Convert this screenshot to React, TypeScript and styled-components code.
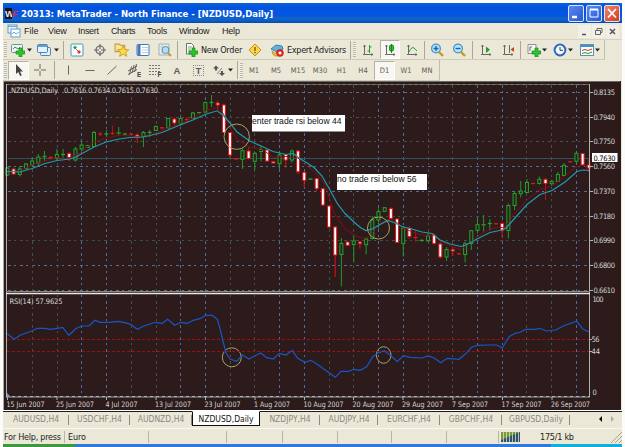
import React from 'react';
import styled, { createGlobalStyle } from 'styled-components';

const GlobalStyle = createGlobalStyle`
  * { box-sizing: border-box; }
  body {
    margin: 0;
    background: #fbfcfa;
    overflow: hidden;
  }
`;

const Screen = styled.div`
  width: 625px;
  height: 447px;
  padding: 3px 3px 0 3px;
  background: #fbfcfa;
  font-family: 'DejaVu Sans Condensed', 'DejaVu Sans', 'Liberation Sans', sans-serif;
  font-size: 8.5px;
  color: #222;
`;
const Frame = styled.div`
  display: flex;
  flex-direction: column;
  height: 444px;
  background: #ebe8d8;
`;
const TitleBar = styled.header`
  display: flex;
  align-items: center;
  height: 20px;
  padding: 1px 2px 0 1px;
  background: linear-gradient(#0a62dc 0, #0354dc 20%, #0455e0 62%, #1265c4 78%, #0a5ac8 90%, #0348b4);
  color: #fff;
`;
const Title = styled.h1`
  flex: 1;
  margin: 0 0 0 3px;
  font-family: 'DejaVu Sans Condensed', 'DejaVu Sans', sans-serif;
  font-size: 9.5px;
  font-weight: 700;
  letter-spacing: -0.04px;
  white-space: pre;
`;
const WinButton = styled.button<{ $close?: boolean }>`
  display: flex;
  width: 16px;
  height: 17px;
  margin-left: 2px;
  padding: 0;
  border: 1px solid #dce6fa;
  border-radius: 2px;
  background: ${(p) => (p.$close ? 'linear-gradient(135deg, #f08468, #d83a20)' : 'linear-gradient(135deg, #5c88f0, #2458d4)')};
`;
const MenuBar = styled.nav`
  display: flex;
  align-items: center;
  height: 17px;
  padding: 0 3px;
  border-bottom: 1px solid #d8d4c4;
  font-family: 'Liberation Sans', sans-serif;
  font-size: 9px;
`;
const MenuItem = styled.span<{ $w: number; $ls?: number }>`
  width: ${(p) => p.$w}px;
  letter-spacing: ${(p) => p.$ls || 0}px;
  white-space: nowrap;
`;
const MdiButton = styled.button`
  display: flex;
  width: 13px;
  height: 13px;
  margin-left: 1px;
  padding: 0;
  border: none;
  background: #f2f0e6;
`;
const Spacer = styled.div`
  flex: 1;
`;
const Toolbar = styled.div<{ $h: number; $w: number }>`
  display: flex;
  align-items: center;
  width: ${(p) => p.$w}px;
  height: ${(p) => p.$h}px;
  border-right: 1px solid #c0bdae;
  border-bottom: 1px solid #cfccbc;
`;
const Cell = styled.div<{ $w: number; $l?: number; $pressed?: boolean }>`
  display: flex;
  align-items: center;
  justify-content: center;
  width: ${(p) => p.$w}px;
  height: 19px;
  margin-left: ${(p) => p.$l || 0}px;
  flex: none;
  svg { flex: none; }
  ${(p) => p.$pressed && `
    background: #f8f7f1;
    border: 1px solid #b4b1a4;
    border-right-color: #fff;
    border-bottom-color: #fff;
  `}
`;
const Label = styled.span<{ $w: number; $ls?: number }>`
  width: ${(p) => p.$w}px;
  flex: none;
  font-size: 9px;
  letter-spacing: ${(p) => p.$ls || 0}px;
  white-space: nowrap;
`;
const Period = styled(Cell)`
  font-size: 7.5px;
  color: #5c5c58;
`;
const ToolLetter = styled.b<{ $boxed?: boolean }>`
  width: 11px;
  height: 11px;
  border: ${(p) => (p.$boxed ? '1px dotted #888' : 'none')};
  font-family: 'Liberation Sans', sans-serif;
  font-size: 9.5px;
  line-height: ${(p) => (p.$boxed ? 9 : 12)}px;
  text-align: center;
  color: #5c5c5c;
`;
const Sep = styled.i<{ $l?: number; $r?: number }>`
  width: 1px;
  height: 18px;
  flex: none;
  margin: 0 ${(p) => p.$r || 0}px 0 ${(p) => p.$l || 0}px;
  background: #aaa798;
`;
const Grip = styled.i<{ $r?: number }>`
  width: 3px;
  height: 15px;
  flex: none;
  margin: 0 ${(p) => p.$r || 0}px 0 1px;
  background: repeating-linear-gradient(#b9b6a6 0 1px, #f4f2e8 1px 2px);
`;
const ChartPane = styled.main`
  height: 329px;
  width: 618px;
  border-left: 1px solid #aaa99c;
  background: #2d1b1b;
`;
const TabBar = styled.nav`
  display: flex;
  align-items: flex-start;
  height: 18px;
  border-top: 1px solid #fff;
  color: #8a8880;
`;
const Tab = styled.div<{ $w: number; $active?: boolean }>`
  position: relative;
  width: ${(p) => p.$w}px;
  height: 15px;
  flex: none;
  border-top: 1px solid #1c1c1c;
  line-height: 15px;
  text-align: center;
  font-size: 8.5px;
  white-space: nowrap;
  ${(p) => p.$active ? `
    background: #fff;
    color: #111;
    border: 1px solid #111;
    border-top-color: #fff;
    line-height: 14px;
  ` : `
    &::after {
      content: '';
      position: absolute;
      right: 0;
      top: 3px;
      width: 1px;
      height: 10px;
      background: #8c8a7e;
    }
  `}
`;
const TabArrows = styled.div`
  flex: 1;
  height: 15px;
  border-top: 1px solid #1c1c1c;
`;
const StatusBar = styled.footer`
  display: flex;
  align-items: center;
  height: 16px;
  border-top: 1px solid #f8f7f0;
  font-size: 9px;
`;
const StatusCell = styled.div<{ $w: number; $pad?: number; $line?: boolean; $ls?: number }>`
  display: flex;
  align-items: center;
  width: ${(p) => p.$w}px;
  height: 12px;
  flex: none;
  padding-left: ${(p) => p.$pad || 0}px;
  border-right: ${(p) => (p.$line ? '1px solid #b8b5a6' : 'none')};
  letter-spacing: ${(p) => p.$ls || 0}px;
  white-space: nowrap;
`;
const Taskbar = styled.div`
  display: flex;
  height: 3px;
  background: #2f7ad8;
`;
const StartEdge = styled.div`
  width: 72px;
  background: #3c9a3c;
`;
const TrayEdge = styled.div`
  width: 71px;
  margin-left: auto;
  background: #12b0d8;
`;

type Candle = [high: number, top: number, bottom: number, low: number, up: 0 | 1];

const candles: Candle[] = [
  [167, 168, 175, 176, 1], [167.5, 169, 174, 175, 0], [166, 169, 174.5, 176.5, 1], [163, 164, 168.5, 169.5, 1],
  [157.5, 161, 165, 166.5, 1], [154, 157, 163, 166, 1], [151, 156, 157, 161, 1], [156, 157, 158, 159, 0],
  [149, 154.5, 158, 160, 1], [149, 154, 155, 158, 1], [152, 153.5, 157.5, 161, 0], [147, 149, 160, 161.5, 1],
  [142, 145, 149, 151, 1], [145, 145.5, 147.5, 148, 1], [131, 132.5, 146.5, 147, 1], [132, 133.5, 134.5, 136, 0],
  [130, 133.5, 134.5, 137, 1], [125.5, 133, 134, 135, 0], [127, 132.5, 133.5, 135.5, 1], [133, 133.5, 134.5, 135, 1],
  [133, 133.5, 134.5, 135, 0], [133, 135, 137, 143, 0], [131, 132.5, 136.5, 147, 1], [130, 132, 133, 137, 1],
  [125.5, 126.5, 130.5, 131, 1], [127, 127.5, 128, 129, 0], [118, 118.5, 128, 129, 1], [117, 119, 123, 125, 0],
  [117, 118.5, 123.5, 126, 1], [117, 119, 120, 122, 0], [112, 113, 118.5, 119, 1], [112, 112.3, 113, 113.5, 1],
  [101.5, 102.5, 112, 113, 1], [95, 102, 103, 107, 1], [100, 103, 105, 110, 0], [103.5, 105, 132.5, 133, 0],
  [132, 132.5, 155, 158, 0], [158, 158.5, 159.5, 160, 0], [148.5, 150.7, 159.3, 169, 1], [147, 151, 158.5, 159.5, 0],
  [152, 153.3, 161.3, 170, 1], [145.5, 149.5, 151.5, 161.5, 1], [149, 150, 161, 162, 0], [161, 161.5, 163, 164, 0],
  [153, 155, 163.7, 169, 1], [154, 154.5, 160, 167.5, 0], [149.5, 151, 160, 162.5, 1], [149.5, 151, 171.7, 174, 0],
  [171, 172.3, 180.5, 187.5, 0], [178, 178.7, 179.5, 180, 1], [177.5, 178.5, 188.7, 191.5, 0], [188, 188.7, 205, 206, 0],
  [205, 206, 227, 228, 0], [226, 227, 255, 277, 0], [238, 243.5, 254.5, 286.5, 1], [241, 242, 245.3, 246, 0],
  [236, 241, 244.5, 262.5, 1], [241, 242, 243.7, 248.5, 0], [237.5, 239, 244.7, 254.3, 1], [216, 220, 238.5, 239.5, 1],
  [208.5, 211.5, 220, 228.5, 1], [207, 207.7, 211.3, 212, 1], [207, 208.5, 218.5, 219.5, 0], [218, 219, 242.5, 243, 0],
  [226, 228, 243.7, 256.5, 1], [226, 228.5, 236.5, 239, 0], [230.5, 237, 238, 241.5, 0], [239, 240, 241, 241.5, 1],
  [233, 236, 240.7, 242, 1], [233.5, 235, 243.5, 244.5, 0], [242, 244, 257, 258.5, 0], [247, 249.5, 257, 261, 1],
  [247, 249.5, 251, 256, 0], [253, 253.3, 254.3, 254.5, 0], [241.5, 243.7, 254.5, 262.5, 1], [230, 230.7, 243.5, 250, 1],
  [219, 224.7, 230.3, 233.5, 1], [215, 224.3, 225.3, 231.5, 1], [219, 223, 224, 230.5, 1], [223, 223.5, 224, 224.5, 0],
  [221.5, 223.5, 230.5, 238, 0], [203.5, 205.5, 230.5, 238.5, 1], [191.5, 193.5, 205.5, 210, 1], [181, 191, 193.7, 197.5, 1],
  [179, 182.5, 192.5, 193, 1], [183, 183.3, 183.8, 184, 0], [176.5, 179.3, 183.5, 184.5, 1], [178, 179.3, 183.5, 200, 0],
  [180, 181.3, 183.7, 186, 1], [172, 174.5, 181.3, 182, 1], [163, 165.3, 175.5, 176, 1], [161, 161.3, 162, 162.3, 0],
  [151.5, 153.3, 161.3, 163, 1], [153, 153.5, 165, 166, 0], [158, 165, 168, 172, 0],
];

const slowMa = '7,171.5 20,172 32,168.5 45,163.5 57,160.5 70,159 75,157.5 82,153.5 94,147 106,142 119,139 130,137.5 143,137 150,135.5 162,132.5 180,125 193,120 205,114.5 217,110.8 223,115 230,123 237,132 249,140.5 261,146 273,151.5 286,154.5 293,153.5 300,158.5 314,167.5 322,176 330,190 337,203 345,213.5 355,223 361,228 366,230.5 372,229 380,224.5 388,220.5 395,223 402,226.5 412,229 422,232 432,233.5 440,240 450,244 461,246.5 466,245 478,238.5 490,232.5 502,230 506,228 515,218 527,204.5 540,194.5 552,190.5 565,182 577,171.5 583,170 589,170.5';
const fastMa = '7,172 20,171 32,165 45,161 57,157.5 68,158.5 80,153 94,142 106,138.5 119,135 131,136 143,137 155,133 167,128.5 180,123.5 193,118 205,110.5 217,107.5 223,113 230,128 237,139 249,147 261,149 274,157.5 286,156.5 298,158 304,164 315,172 325,184 334,213 345,229 358,237 366,238.5 373,232 380,223 390,219 396,222 405,229 417,233.5 428,236 434,234.5 440,241 450,246 461,249.5 468,244 480,235 490,229 499,227 504,228 514,214 527,200 540,189.5 552,186 565,176 575,167.5 583,165 588,168';
const rsi = '7.3,333.7 14,339.3 20.7,335 32.3,330.7 37.3,328.3 45,328.3 50,329.3 57.3,328.3 62.7,327.3 69,335.3 75.7,328.7 81.7,326 89,326 95,320.3 100,322.3 110,322.3 118,321.3 125,322.7 130.7,324.3 137.3,329.3 143.3,326.3 155,322.3 162.3,323.3 167.7,319.3 174.7,325.3 181,322.3 187.3,323.3 193.3,320.3 200,318.7 205.7,315.3 212.3,315.3 217.3,319.3 220,328.3 222.7,340 226,352.7 230,359 236.7,361.3 242.3,355 249,359 260.7,353 266.7,357.7 273.3,359 279.3,353.3 286,355 292.3,350.3 297.7,358.3 305,362.3 311,360.3 318.3,365 335.3,377.3 341,371.3 348.3,371.3 354,369.3 360,370.3 366.7,366.7 372.7,356.7 378.3,353 384.3,350.7 391,355.7 397.3,361.7 403.3,355.7 410,357.3 421.7,358 428.3,356 434.3,358 440.7,362.7 447.3,358.3 459,359.3 465,354.3 471.7,347.3 477.3,345.3 488.3,345 496.7,345 502.3,348 509,336.7 515,333.3 520,332.3 525.7,329.3 535,329.3 540,328.3 546,331 555.7,330 563.3,326 576.7,321.3 583,329.3 589,331.7';

const gridY = [92.5, 117.5, 141.5, 166.5, 191.5, 216.5, 240.5, 265.5, 290.5];
const prices = ['0.8135', '0.7940', '0.7750', '0.7560', '0.7370', '0.7180', '0.6990', '0.6800', '0.6610'];
const dates: [number, string, number][] = [
  [6.5, '15 Jun 2007', 38], [56, '25 Jun 2007', 38], [105.5, '4 Jul 2007', 32], [155, '13 Jul 2007', 36],
  [204.5, '23 Jul 2007', 36], [254, '1 Aug 2007', 36], [303.5, '10 Aug 2007', 40], [352.5, '20 Aug 2007', 41],
  [402, '29 Aug 2007', 41], [452, '7 Sep 2007', 36], [501.5, '17 Sep 2007', 40], [551, '26 Sep 2007', 39],
];

const ChartSvg = styled.svg`
  display: block;
  font-family: 'DejaVu Sans Condensed', 'DejaVu Sans', sans-serif;
  font-size: 7.5px;
  fill: #d2d6d4;
`;

function Chart() {
  return (
    <ChartSvg width="617" height="329" viewBox="4 81 617 329">
      <rect x="4" y="81" width="617" height="329" fill="#2d1b1b" />
      <path d="M4 81.5H620" stroke="#6c6a62" />
      <path d="M7 84.5H590" stroke="#5e6440" />
      <path d="M7 84.5H590" stroke="#7486a0" strokeDasharray="2 4" />
      {gridY.map((y, i) => (
        <path key={y} d={`M8 ${y}H589`} stroke={[0, 3, 4, 7, 8].includes(i) ? '#50709c' : '#40504c'} strokeDasharray="3 3 2 4" />
      ))}
      {Array.from({ length: 23 }, (_, k) => (
        <path
          key={k}
          d={`M${Math.round(32 + k * 24.72) + 0.5} 85V396`}
          stroke={k % 4 > 1 ? '#4b6ca4' : '#454f4d'}
          strokeDasharray="3 3 2 4"
        />
      ))}
      <path d="M8 158.5H589" stroke="#33525a" />
      <g>
        {candles.map(([high, top, bottom, low, up], i) => {
          const x = 7.4 + i * 6.185;
          const color = up ? '#20a52c' : '#e01616';
          const flat = bottom - top < 1.3;
          return (
            <g key={i} stroke={color}>
              <path d={`M${x} ${high}V${up ? top : low}M${x} ${bottom}V${low}`} strokeWidth="0.9" opacity={up ? 1 : 0.75} />
              {flat ? (
                <path d={`M${x - 2} ${(top + bottom) / 2}h4`} strokeWidth="1.3" />
              ) : (
                <rect x={x - 1.5} y={top} width="3" height={bottom - top} fill={up ? '#2b201a' : '#fff'} />
              )}
            </g>
          );
        })}
      </g>
      <polyline points={fastMa} fill="none" stroke="#8c0c10" strokeWidth="0.9" />
      <polyline points={slowMa} fill="none" stroke="#1c9cb4" strokeWidth="1.2" />
      <g fill="none" stroke="#a3a468" strokeWidth="1">
        <circle cx="236.7" cy="136.7" r="12.7" />
        <circle cx="378.5" cy="228" r="11" />
        <circle cx="231.8" cy="357.3" r="9.5" />
        <ellipse cx="383.7" cy="355" rx="7.3" ry="8.3" />
      </g>
      <path d="M6.5 84V397.5" stroke="#aeb4b8" />
      <path d="M589.5 84V397" stroke="#aeb4ac" />
      <path d="M6 291.5H590" stroke="#8a8a78" />
      <path d="M6 293.5H590" stroke="#e8e8e0" strokeWidth="1.4" />
      <path d="M7 339.5H589M7 351.5H589" stroke="#a20c0c" strokeDasharray="3 2" />
      <polyline points={rsi} fill="none" stroke="#1458c8" strokeWidth="1.2" />
      <path d="M6 397H590" stroke="#6e7878" strokeWidth="1.6" />
      <path d="M6 396.5H590" stroke="#aeb8b8" strokeDasharray="3 3" />
      <path d="M7 393l4 4h-4z" fill="#7c98ac" />
      {gridY.map((y, i) => (
        <g key={y}>
          <path d={`M590 ${y}h3`} stroke="#aeb4ac" />
          <text x="593.5" y={y + 2.6} textLength="21.5">{prices[i]}</text>
        </g>
      ))}
      <rect x="592" y="153" width="25.5" height="9" fill="#fff" />
      <text x="593.5" y="160.6" fill="#000" textLength="22">0.7630</text>
      <text x="592.5" y="301.5" textLength="11">100</text>
      <path d="M590 339.5h2M590 351.5h2" stroke="#aeb4ac" />
      <text x="591.5" y="342" textLength="8">56</text>
      <text x="591.5" y="354" textLength="8.5">44</text>
      <text x="592.5" y="394.5">0</text>
      {dates.map(([x, d, w]) => (
        <g key={d}>
          <path d={`M${x + 1} 397v3`} stroke="#aeb4ac" />
          <text x={x} y="406.5" textLength={w} lengthAdjust="spacingAndGlyphs">{d}</text>
        </g>
      ))}
      <text x="9" y="92.8" textLength="49">.NZDUSD,Daily</text>
      <text x="64" y="92.8" textLength="94">0.7616 0.7634 0.7615 0.7630</text>
      <text x="9.5" y="303.8" textLength="53">RSI(14) 57.9625</text>
      <g fontFamily="Liberation Sans, sans-serif" fontSize="8.6">
        <rect x="252" y="115" width="93" height="16.5" fill="#fff" />
        <text x="252" y="123.8" fill="#111" textLength="89.5">enter trade rsi below 44</text>
        <rect x="337" y="174" width="90" height="16" fill="#fff" />
        <text x="337" y="182.4" fill="#111" textLength="79.5">no trade rsi below 56</text>
      </g>
    </ChartSvg>
  );
}

// Toolbar drawings share a 14x14 box
function Glyph({ children, size = 14 }: { children: React.ReactNode; size?: number }) {
  return <svg width={size} height={size} viewBox="0 0 14 14" fill="none">{children}</svg>;
}
function Caret() {
  return <svg width="5" height="4" viewBox="0 0 5 4"><path d="M0 .5h5L2.5 3.5z" fill="#222" /></svg>;
}
const Plus = () => (
  <path d="M8 5h3v3h3v3h-3v3H8v-3H5V8h3z" fill="#2fc22f" stroke="#148a18" strokeWidth=".7" />
);
const Axes = () => <path d="M3.5 2v9.500H12M2.500 3.500l1-1.500 1 1.500M10.500 10.500l1.500 1-1.500 1M2 11.500h1.500" stroke="#626a68" />;
const Lens = ({ plus }: { plus?: boolean }) => (
  <>
    <path d="M9 9l4 4" stroke="#c89a20" strokeWidth="2.4" />
    <circle cx="6" cy="5.5" r="4.4" fill="#b4e4f8" stroke="#4a90c8" strokeWidth="1.2" />
    <path d={plus ? 'M3.5 5.5h5M6 3v5' : 'M3.5 5.5h5'} stroke="#1868a8" strokeWidth="1.4" />
  </>
);

function MainToolbar() {
  return (
    <Toolbar $h={20} $w={602}>
      <Grip />
      <Cell $w={21}>
        <Glyph>
          <rect x=".5" y="1.5" width="11" height="8" rx="1" fill="#eef4f4" stroke="#6a92ac" />
          <path d="M2 6l2-2 3 2 2-2" stroke="#3a9a50" />
          <Plus />
        </Glyph>
      </Cell>
      <Cell $w={3}><Caret /></Cell>
      <Cell $w={25}>
        <Glyph>
          <rect x="3.5" y="4.5" width="10" height="8" rx="1" fill="#e0eef8" stroke="#4888b8" />
          <rect x=".5" y="1.5" width="10" height="8" rx="1" fill="#e8f2fa" stroke="#4888b8" />
          <path d="M1 3h9" stroke="#62a0d0" strokeWidth="2" />
        </Glyph>
      </Cell>
      <Cell $w={1}><Caret /></Cell>
      <Sep $l={6} $r={2} />
      <Cell $w={22}>
        <Glyph>
          <rect x="1" y="1" width="12" height="12" rx="1" fill="#fafcfe" stroke="#4a96c8" />
          <path d="M3 4.500l2-2 2 2-2 2z" fill="#2fa83c" />
          <path d="M5 5l4 4" stroke="#8a8a50" />
          <path d="M7 9l2-2 2 2-2 2z" fill="#e03c28" />
        </Glyph>
      </Cell>
      <Cell $w={23}>
        <Glyph>
          <circle cx="7" cy="7" r="4" stroke="#666" strokeWidth="1.2" />
          <path d="M7 1v5M7 8v5M1 7h5M8 7h5" stroke="#666" strokeWidth="1.2" />
        </Glyph>
      </Cell>
      <Cell $w={20}>
        <Glyph size={15}>
          <path d="M1 2h4l1 1h4v6H1z" fill="#f6e49c" stroke="#c89c30" />
          <path d="M8.5 3.5l1.6 3.4 3.7.4-2.8 2.4.9 3.7-3.4-2-3.3 2 .9-3.7-2.8-2.4 3.7-.4z" fill="#ffd83c" stroke="#c0901c" strokeWidth=".7" />
        </Glyph>
      </Cell>
      <Cell $w={23}>
        <Glyph>
          <rect x="1" y="1.5" width="12" height="11" rx="1" fill="#fff" stroke="#3c7cc0" />
          <path d="M3 2v10" stroke="#3c7cc0" strokeWidth="3" />
          <path d="M6 4.5h6M6 7h6M6 9.5h6" stroke="#c0ccd8" />
          <path d="M2.5 4.5h1M2.5 9h1" stroke="#e04830" />
        </Glyph>
      </Cell>
      <Cell $w={21}>
        <Glyph>
          <path d="M1 1h10v11H1z" fill="#e8eef0" stroke="#a0b0b8" />
          <path d="M2 4h8M4 2v9" stroke="#c0ccd0" />
          <circle cx="7.5" cy="7" r="3.5" fill="#b8dcf0" stroke="#5890b8" />
          <path d="M10 10l3 3" stroke="#c89a20" strokeWidth="2" />
        </Glyph>
      </Cell>
      <Sep $l={2} $r={2} />
      <Cell $w={21}>
        <Glyph>
          <path d="M2.5.5h5l2 2V11h-7z" fill="#fff" stroke="#5c7c60" />
          <path d="M4 4h4M4 6h3M4 8h3" stroke="#80a084" />
          <Plus />
        </Glyph>
      </Cell>
      <Label $w={43} $ls={-0.25}>New Order</Label>
      <Cell $w={22}>
        <Glyph>
          <path d="M7 1l6 6-6 6-6-6z" fill="#f8d848" stroke="#c49418" />
          <path d="M7 4v4M7 9v1.3" stroke="#7c5008" strokeWidth="1.3" />
        </Glyph>
      </Cell>
      <Cell $w={21}>
        <Glyph>
          <path d="M1 6l5-4 6 1 1 3-6 3z" fill="#68b0dc" stroke="#3c80ac" />
          <path d="M2 8q4 4 7 1v4H5q-3-1-3-5z" fill="#f0c030" stroke="#b48818" strokeWidth=".7" />
          <circle cx="10" cy="10" r="3.4" fill="#e82820" stroke="#b41010" strokeWidth=".6" />
          <rect x="8.7" y="8.7" width="2.6" height="2.6" fill="#fff" />
        </Glyph>
      </Cell>
      <Label $w={63} $ls={-0.3}>Expert Advisors</Label>
      <Sep $r={1} />
      <Grip />
      <Cell $w={24}>
        <Glyph><Axes /><path d="M8.5 2v8M6.5 8h2M8.5 4h2" stroke="#18a028" /></Glyph>
      </Cell>
      <Cell $w={20} $pressed>
        <Glyph><Axes /><rect x="6.5" y="2" width="4" height="6" rx="1.5" fill="#28c838" stroke="#108820" /><path d="M8.5 1v9" stroke="#108820" /></Glyph>
      </Cell>
      <Cell $w={23}>
        <Glyph><Axes /><path d="M4 9q3-6 5-4t3 3" stroke="#18a028" /></Glyph>
      </Cell>
      <Sep $l={1} $r={1} />
      <Cell $w={21}><Glyph><Lens plus /></Glyph></Cell>
      <Cell $w={23}><Glyph><Lens /></Glyph></Cell>
      <Sep $l={2} $r={2} />
      <Cell $w={22}>
        <Glyph><Axes /><path d="M7 3.5l4 3.2L7 10z" fill="#20a030" /></Glyph>
      </Cell>
      <Cell $w={21}>
        <Glyph><Axes /><path d="M8.5 2v8" stroke="#626a68" /><path d="M13 4v5l-3.5-2.5z" fill="#c84818" /></Glyph>
      </Cell>
      <Sep $l={2} $r={2} />
      <Cell $w={21}>
        <Glyph>
          <path d="M1 1.5h8v9H1z" fill="#f4f6f4" stroke="#8c9490" />
          <path d="M3 8V4h2" stroke="#687070" />
          <Plus />
        </Glyph>
      </Cell>
      <Cell $w={1}><Caret /></Cell>
      <Cell $w={21} $l={4}>
        <Glyph>
          <circle cx="7" cy="7" r="5.4" fill="#f2f8fe" stroke="#2c68c4" strokeWidth="2" />
          <path d="M7 4v3.3h3" stroke="#345" />
        </Glyph>
      </Cell>
      <Cell $w={1}><Caret /></Cell>
      <Cell $w={21} $l={5}>
        <Glyph>
          <rect x=".5" y="1.5" width="13" height="11" fill="#fafcfa" stroke="#5c90b8" />
          <path d="M1 3h12" stroke="#4890cc" strokeWidth="2" />
          <path d="M2 7.5l3-1 3 1 4-1.5" stroke="#c83c28" />
          <path d="M2 10.5l3-1 3 1 4-1.5" stroke="#28983c" />
        </Glyph>
      </Cell>
      <Cell $w={1}><Caret /></Cell>
    </Toolbar>
  );
}

const SmallLetter = styled.text`
  font: 700 6.5px 'Liberation Sans', sans-serif;
  fill: #444;
`;

function LineToolbar() {
  return (
    <Toolbar $h={21} $w={437}>
      <Grip $r={1} />
      <Cell $w={21} $pressed>
        <Glyph><path d="M4 1v10l2.3-2 1.8 4 1.7-.8L8 8.400h3z" fill="#444" /></Glyph>
      </Cell>
      <Cell $w={22}><Glyph><path d="M7 1v5M7 8v5M1 7h5M8 7h5" stroke="#666" /></Glyph></Cell>
      <Sep $l={3} $r={2} />
      <Cell $w={22}><Glyph><path d="M7.500 2.500v9" stroke="#666" /></Glyph></Cell>
      <Cell $w={22}><Glyph><path d="M2.500 7.500h9" stroke="#666" /></Glyph></Cell>
      <Cell $w={22}><Glyph><path d="M2.500 11.500l9-8.500" stroke="#666" /></Glyph></Cell>
      <Cell $w={21}>
        <Glyph>
          <path d="M1 8l9-5M1 11.500l9-5M2.500 11.500l2-8M5 10l2-8M7.500 9l2-8" stroke="#555" strokeWidth=".9" />
          <SmallLetter x="10" y="13.5">E</SmallLetter>
        </Glyph>
      </Cell>
      <Cell $w={22}>
        <Glyph>
          <path d="M1 2.5h11M1 5.5h11M1 8.5h11M1 11.5h7" stroke="#777" strokeDasharray="2 1" />
          <SmallLetter x="9.5" y="14">F</SmallLetter>
        </Glyph>
      </Cell>
      <Cell $w={22}><ToolLetter>A</ToolLetter></Cell>
      <Cell $w={21}><ToolLetter $boxed>T</ToolLetter></Cell>
      <Cell $w={20}>
        <Glyph>
          <path d="M1 5.500l3-3 3 3H5v2H3v-2z" fill="#555" />
          <path d="M5 11l5-6" stroke="#888" />
          <path d="M7 10h2V8h2v2h2l-3 3z" fill="#555" />
        </Glyph>
      </Cell>
      <Cell $w={3}><Caret /></Cell>
      <Sep $l={5} $r={1} />
      <Grip />
      <Period $w={22}>M1</Period>
      <Period $w={22}>M5</Period>
      <Period $w={22}>M15</Period>
      <Period $w={22}>M30</Period>
      <Period $w={21}>H1</Period>
      <Period $w={22}>H4</Period>
      <Period $w={21} $pressed>D1</Period>
      <Period $w={22}>W1</Period>
      <Period $w={20}>MN</Period>
    </Toolbar>
  );
}

const Brand = styled.span`
  display: flex;
  width: 13px;
  height: 11px;
  margin-left: 1px;
  font: italic 900 9.5px/11px 'Liberation Sans', sans-serif;
  letter-spacing: -1px;
  color: #f02818;
  b {
    width: 7px;
    overflow: hidden;
    background: #181418;
    color: #f0e8e8;
    font-style: normal;
  }
`;

function App() {
  return (
    <>
      <GlobalStyle />
      <Screen>
        <Frame>
          <TitleBar>
            <Brand><b>W</b>F</Brand>
            <Title>20313: MetaTrader - North Finance - [NZDUSD,Daily]</Title>
            <WinButton><Glyph><path d="M3 11h5" stroke="#fff" strokeWidth="2.500" /></Glyph></WinButton>
            <WinButton><Glyph><path d="M3 3.500h8v7.500H3z" stroke="#fff" /><path d="M3 3.500h8" stroke="#fff" strokeWidth="2" /></Glyph></WinButton>
            <WinButton $close><Glyph><path d="M3 3l8 8.500M11 3l-8 8.500" stroke="#fff" strokeWidth="1.8" /></Glyph></WinButton>
          </TitleBar>
          <MenuBar>
            <Cell $w={15}>
              <Glyph>
                <rect x="1" y="1" width="9" height="8" fill="#eef6fc" stroke="#5c9ccc" />
                <rect x="4" y="5" width="9" height="8" fill="#fff" stroke="#5c9ccc" />
                <path d="M1 2.500h9M5 10l2-2 2 2 3-2" stroke="#68a8d4" />
              </Glyph>
            </Cell>
            <Cell $w={3} />
            <MenuItem $w={24}>File</MenuItem>
            <MenuItem $w={30} $ls={-0.2}>View</MenuItem>
            <MenuItem $w={33} $ls={-0.3}>Insert</MenuItem>
            <MenuItem $w={36} $ls={-0.4}>Charts</MenuItem>
            <MenuItem $w={32} $ls={-0.2}>Tools</MenuItem>
            <MenuItem $w={43} $ls={-0.3}>Window</MenuItem>
            <MenuItem $w={20} $ls={-0.2}>Help</MenuItem>
            <Spacer />
            <MdiButton><svg width="13" height="13"><path d="M4 9.500h4" stroke="#555" strokeWidth="1.500" /></svg></MdiButton>
            <MdiButton><svg width="13" height="13" fill="none"><path d="M3.500 5.500h5v4h-5zM5 5V3.500h5v4H9" stroke="#666" /></svg></MdiButton>
            <MdiButton><svg width="13" height="13"><path d="M4 4l5 5M9 4L4 9" stroke="#555" strokeWidth="1.500" /></svg></MdiButton>
          </MenuBar>
          <MainToolbar />
          <LineToolbar />
          <ChartPane><Chart /></ChartPane>
          <TabBar>
            <Tab $w={66}>AUDUSD,H4</Tab>
            <Tab $w={61}>USDCHF,H4</Tab>
            <Tab $w={62}>AUDNZD,H4</Tab>
            <Tab $w={68} $active>NZDUSD,Daily</Tab>
            <Tab $w={60}>NZDJPY,H4</Tab>
            <Tab $w={58}>AUDJPY,H4</Tab>
            <Tab $w={62}>EURCHF,H4</Tab>
            <Tab $w={62}>GBPCHF,H4</Tab>
            <Tab $w={68}>GBPUSD,Daily</Tab>
            <TabArrows>
              <svg width="50" height="13"><path d="M32 4v6l-3-3z" fill="#111" /><path d="M41 4v6l3-3z" fill="#aaa" /></svg>
            </TabArrows>
          </TabBar>
          <StatusBar>
            <StatusCell $w={62} $pad={1} $ls={-0.25} $line>For Help, press</StatusCell>
            <StatusCell $w={84} $pad={3} $ls={-0.15} $line>Euro</StatusCell>
            <StatusCell $w={78} $line />
            <StatusCell $w={56} $line />
            <StatusCell $w={55} $line />
            <StatusCell $w={54} $line />
            <StatusCell $w={55} $line />
            <StatusCell $w={52} $line />
            <StatusCell $w={41} $pad={2}>
              <svg width="19" height="10">
                <rect width="19" height="10" fill="#2c5470" />
                <path d="M0 0h19L0 8z" fill="#7c9838" />
                <path d="M2.500 0v10M5.500 0v10M8.500 0v10M11.500 0v10M14.500 0v10M17.500 0v10" stroke="#d8dcc0" strokeWidth=".8" />
              </svg>
            </StatusCell>
            <StatusCell $w={70} $ls={-0.25}>175/1 kb</StatusCell>
            <svg width="12" height="12"><path d="M1 12L12 1M5 12l7-7M9 12l3-3" stroke="#a8a594" /></svg>
          </StatusBar>
          <Taskbar>
            <StartEdge />
            <TrayEdge />
          </Taskbar>
        </Frame>
      </Screen>
    </>
  );
}

export default App;
